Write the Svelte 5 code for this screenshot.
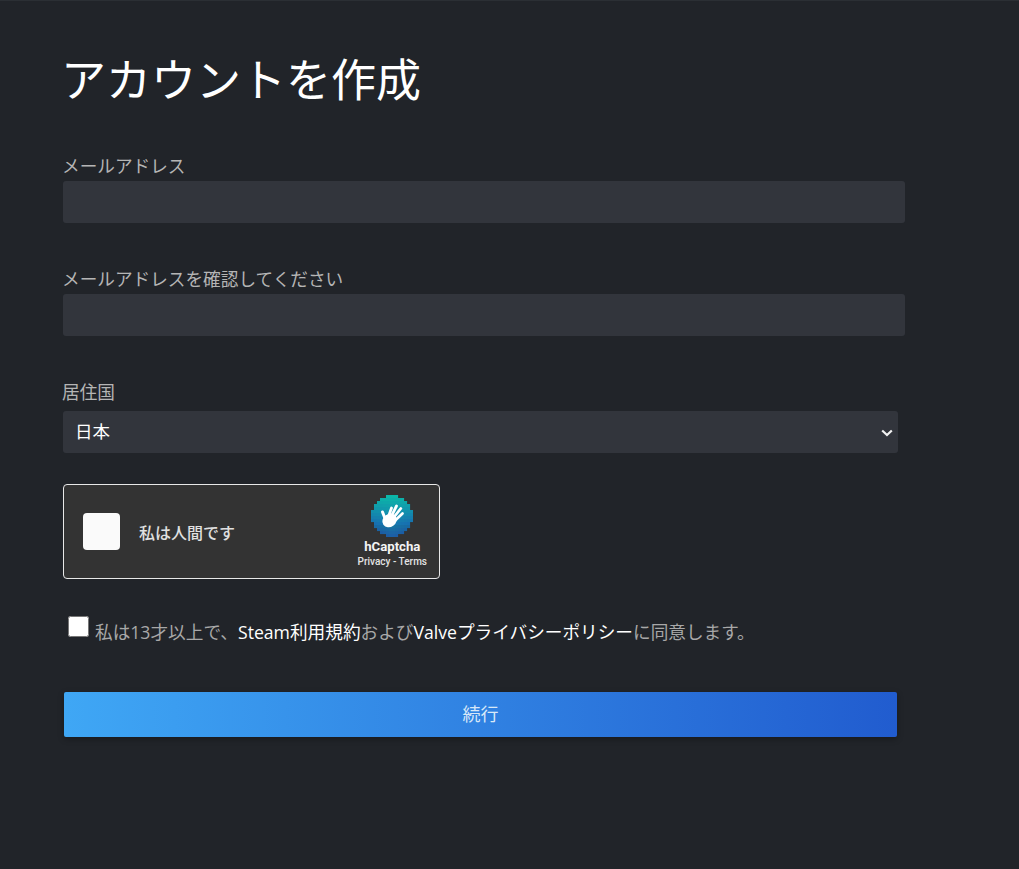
<script>
  const widths = [4, 8, 10, 12, 12, 14, 14, 14, 14, 12, 12, 10, 8, 4];
  const cells = [];
  widths.forEach((w, y) => {
    const start = (14 - w) / 2;
    for (let i = 0; i < w; i++) {
      const x = start + i;
      const t = y / 13;
      const edge = Math.abs(x - 6.5) / 7;
      const r = Math.round(12 + 16 * t);
      const g = Math.round(182 - 85 * t - 20 * edge * t);
      const b = Math.round(168 + 12 * t - (t > 0.75 ? 14 : 0));
      cells.push({ x: x * 3, y: y * 3, fill: `rgb(${r},${g},${b})` });
    }
  });
</script>

<main class="page">
  <h1>アカウントを作成</h1>

  <div class="field first">
    <label for="email">メールアドレス</label>
    <input id="email" type="text" />
  </div>

  <div class="field second">
    <label for="confirm">メールアドレスを確認してください</label>
    <input id="confirm" type="text" />
  </div>

  <div class="field third">
    <label for="country">居住国</label>
    <div class="select-wrap">
      <select id="country">
        <option>日本</option>
      </select>
      <svg class="chevron" width="12" height="8" viewBox="0 0 12 8" aria-hidden="true">
        <path d="M1.200 1.500 L6 6 L10.800 1.500" fill="none" stroke="#f2f2f2" stroke-width="2.200" />
      </svg>
    </div>
  </div>

  <div class="captcha">
    <div class="captcha-box"></div>
    <span class="captcha-text">私は人間です</span>
    <div class="captcha-brand">
      <svg width="42" height="42" viewBox="0 0 42 42" aria-hidden="true">
        {#each cells as c}
          <rect x={c.x} y={c.y} width="3.100" height="3.100" fill={c.fill} />
        {/each}
        <ellipse cx="18.500" cy="25.500" rx="7.500" ry="6.500" fill="#fff" transform="rotate(-35 18.500 25.500)" />
        <g stroke="#fff" stroke-linecap="round" fill="none">
          <path d="M15 26 L11.500 17" stroke-width="3" />
          <path d="M17 23 L20.500 13" stroke-width="2.800" />
          <path d="M19.500 23 L25.500 11" stroke-width="2.800" />
          <path d="M21.500 24 L29.800 13.500" stroke-width="2.800" />
          <path d="M22.500 27 L31.500 18.500" stroke-width="2.800" />
        </g>
      </svg>
      <div class="brand-name">hCaptcha</div>
      <div class="brand-links">Privacy - Terms</div>
    </div>
  </div>

  <div class="agree">
    <input type="checkbox" id="agree" />
    <label for="agree">私は13才以上で、<a href="#steam">Steam利用規約</a>および<a href="#valve">Valveプライバシーポリシー</a>に同意します。</label>
  </div>

  <button type="button" class="continue">続行</button>
</main>

<style>
  :global(body) {
    margin: 0;
    background: #212429;
  }
  .page {
    box-sizing: border-box;
    height: 869px;
    padding: 1px 0 0 63px;
    border-top: 1px solid #2b2f34;
    background: #212429;
    font-family: "Noto Sans CJK JP", sans-serif;
    color: #b8b6b4;
    overflow: hidden;
  }
  h1 {
    margin: 43px 0 0 -2px;
    font-size: 45px;
    line-height: 66px;
    font-weight: 400;
    color: #fff;
    height: 66px;
  }
  .field label {
    display: block;
    margin-left: -1px;
    font-size: 17.65px;
    line-height: 24px;
    height: 24px;
    color: #b5b5b5;
  }
  .first { margin-top: 43px; }
  .second { margin-top: 44px; }
  .third { margin-top: 44px; }
  input[type="text"] {
    display: block;
    box-sizing: border-box;
    width: 842px;
    height: 42px;
    margin-top: 3px;
    border: 0;
    border-radius: 3px;
    background: #32353c;
    outline: none;
  }
  .select-wrap {
    position: relative;
    width: 835px;
    margin-top: 7px;
  }
  select {
    display: block;
    box-sizing: border-box;
    width: 100%;
    height: 42px;
    padding: 0 8px 3px 12px;
    appearance: none;
    border: 0;
    border-radius: 3px;
    background: #32353c;
    color: #fff;
    font-family: "Noto Sans CJK JP", sans-serif;
    font-size: 17.5px;
    outline: none;
  }
  .chevron {
    position: absolute;
    right: 5px;
    top: 18px;
  }
  .captcha {
    box-sizing: border-box;
    display: flex;
    align-items: center;
    width: 377px;
    height: 95px;
    margin-top: 31px;
    padding: 0 12px 0 19px;
    border: 1px solid #e8e8e8;
    border-radius: 4px;
    background: #333;
  }
  .captcha-box {
    width: 37px;
    height: 37px;
    border-radius: 4px;
    background: #fafafa;
  }
  .captcha-text {
    margin-left: 19px;
    font-size: 16px;
    font-weight: 500;
    color: #e0e0e0;
  }
  .captcha-brand {
    margin-left: auto;
    display: flex;
    flex-direction: column;
    align-items: center;
    padding-bottom: 1px;
  }
  .captcha-brand svg { display: block; }
  .brand-name {
    margin-top: 2px;
    font-family: "Roboto", sans-serif;
    font-size: 13.200px;
    line-height: 15px;
    font-weight: 700;
    color: #f4f4f4;
  }
  .brand-links {
    margin-top: 1px;
    font-family: "Roboto", sans-serif;
    font-size: 10px;
    line-height: 13px;
    font-weight: 500;
    color: #e4e4e4;
  }
  .agree {
    display: flex;
    align-items: flex-start;
    margin-top: 37px;
    padding-left: 5px;
  }
  .agree input {
    width: 21px;
    height: 21px;
    margin: 0 6px 0 0;
    flex: none;
  }
  .agree label {
    margin-top: 2px;
    font-family: "Open Sans", "Noto Sans CJK JP", sans-serif;
    font-size: 17.65px;
    line-height: 28px;
    color: #a8a8a8;
  }
  .agree a {
    color: #fff;
    text-decoration: none;
  }
  .continue {
    display: block;
    width: 833px;
    height: 45px;
    margin: 46px 0 0 1px;
    padding: 0 0 3px;
    border: 0;
    border-radius: 2px;
    background: linear-gradient(90deg, #3fa7f5 0%, #215ccf 100%);
    box-shadow: 0 2px 6px rgba(0, 0, 0, 0.3);
    color: #d8e8f8;
    font-family: "Noto Sans CJK JP", sans-serif;
    font-size: 18px;
  }
</style>
